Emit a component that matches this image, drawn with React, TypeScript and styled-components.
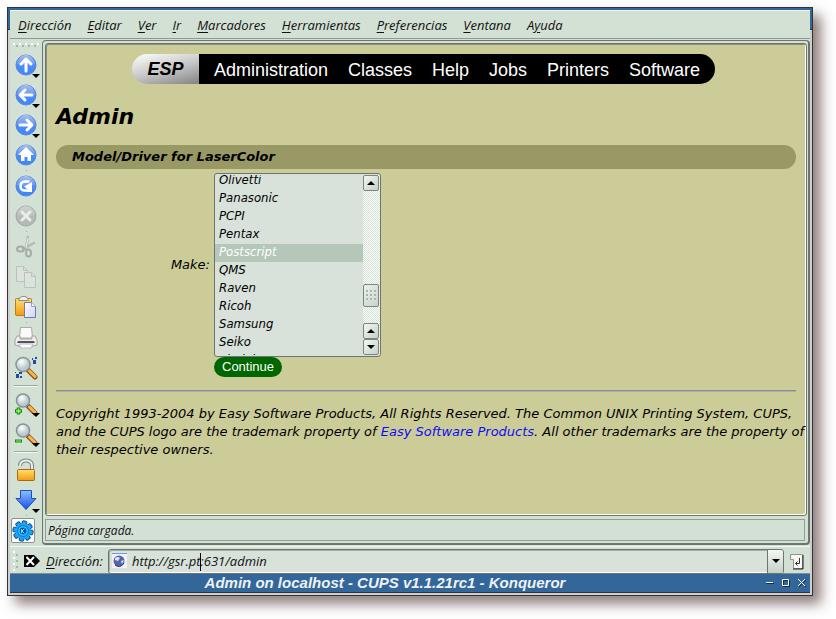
import React, { useEffect, useRef } from "react";
import styled, { createGlobalStyle } from "styled-components";

const chrome = "#d3e0d4";
const khaki = "#cccc99";
const ui = `italic 13px/16px "Open Sans", "Noto Sans", sans-serif`;
const page = `"DejaVu Sans", sans-serif`;

const GlobalStyle = createGlobalStyle`
  *, *::before, *::after { box-sizing: border-box; }
  body { margin: 0; background: #fff; }
  button, input, select { margin: 0; font: inherit; color: inherit; }
  svg { flex: none; }
`;

const Desktop = styled.div`
  display: flex;
  min-height: 100vh;
  padding: 7px 23px 23px 7px;
`;

const WindowFrame = styled.main`
  flex: 1;
  min-width: 0;
  display: flex;
  flex-direction: column;
  padding: 2px;
  border: 1px solid #333;
  background: linear-gradient(#336699 21px, #333 21px, #333 22px, #cdd0ce 22px);
  box-shadow: 8px 8px 12px rgba(76, 48, 48, 0.62);
  color: #111;
  font: ${ui};
`;

const MenuBar = styled.nav`
  display: flex;
  gap: 16px;
  height: 29px;
  padding: 5px 8px 0;
  border-top: 1px solid #edf3ee;
  border-bottom: 1px solid #8f9990;
  background: ${chrome};
`;

const MenuButton = styled.button`
  height: 18px;
  padding: 0;
  border: 0;
  background: none;
`;

const Accel = styled.span`
  text-decoration: underline;
  text-underline-offset: 2px;
`;

const Body = styled.div`
  flex: 1;
  display: flex;
  background: ${chrome};
`;

const Rail = styled.aside`
  flex: 0 0 32px;
  display: flex;
  flex-direction: column;
  align-items: center;
`;

const RailGrip = styled.div`
  flex: 0 0 10px;
  width: 26px;
  margin-top: 1px;
  background:
    radial-gradient(circle at 1px 1px, #fff 1px, transparent 1px) 0 3px / 6px 6px,
    radial-gradient(circle at 1px 1px, #a9b3aa 1px, transparent 1px) 3px 5px / 6px 6px;
  background-repeat: repeat-x;
`;

const RailButton = styled.button<{ $pressed?: boolean }>`
  display: flex;
  align-items: center;
  justify-content: center;
  position: relative;
  width: ${(p) => (p.$pressed ? 24 : 28)}px;
  height: ${(p) => (p.$pressed ? 25 : 30)}px;
  margin-top: ${(p) => (p.$pressed ? 2 : 0)}px;
  margin-right: ${(p) => (p.$pressed ? 6 : 0)}px;
  padding: 0;
  border: ${(p) => (p.$pressed ? "1px solid #8b928c" : "0")};
  border-radius: 2px;
  background: ${(p) => (p.$pressed ? "#fff" : "none")};
`;

const RailArrow = styled.span`
  position: absolute;
  right: 0;
  bottom: 2px;
  border: 4px solid transparent;
  border-top-color: #000;
  border-bottom: 0;
`;

const Dot = styled.i`
  width: 1px;
  height: 1px;
  background: #9aa59b;
`;

const RailRule = styled.hr`
  width: 24px;
  height: 2px;
  margin: 2px 0;
  border: 0;
  border-top: 1px solid #9da89e;
  border-bottom: 1px solid #f4f8f4;
`;

const Panel = styled.section`
  flex: 1;
  min-width: 0;
  display: flex;
  flex-direction: column;
  margin: 1px 0;
  padding: 2px 1px 1px 2px;
  border: 1px solid #6d766e;
  border-width: 1px 2px 2px 1px;
  border-radius: 4px;
  background: ${chrome};
`;

const View = styled.article`
  flex: 1;
  padding: 10px;
  border: 1px solid #6d766e;
  border-radius: 3px;
  background: ${khaki};
  box-shadow: inset -1px -1px #fff, inset 1px 1px #8d9178;
  color: #000;
  font: italic 13px/18px ${page};
`;

const Status = styled.div`
  height: 22px;
  margin: 3px 2px 1px 0;
  padding: 3px 2px;
  border: 1px solid #929d94;
  font-size: 12px;
`;

const SiteNav = styled.nav`
  display: flex;
  justify-content: center;
  padding-right: 5px;
  font: 18px/30px "Liberation Sans", Arial, sans-serif;
`;

const Esp = styled.a`
  width: 67px;
  border-radius: 15px 0 0 15px;
  background: linear-gradient(165deg, #f4f4f4 10%, #c8c8c8 50%, #8a8a8a 95%);
  color: #000;
  font-weight: bold;
  font-style: italic;
  text-align: center;
  text-decoration: none;
`;

const SiteLinks = styled.div`
  display: flex;
  gap: 20px;
  padding: 1px 15px 0;
  height: 30px;
  border-radius: 0 15px 15px 0;
  background: #000;
`;

const SiteLink = styled.a`
  color: #fff;
  text-decoration: none;
`;

const Title = styled.h1`
  margin: 19px 0 14px;
  font-size: 22px;
  line-height: 28px;
`;

const Heading = styled.h2`
  margin: 0;
  padding: 0 16px;
  border-radius: 12px;
  background: #999966;
  font-size: 13px;
  line-height: 24px;
`;

const Form = styled.form`
  display: grid;
  grid-template-columns: 154px 1fr;
  column-gap: 4px;
  align-items: center;
  justify-items: start;
  margin-top: 4px;
`;

const MakeLabel = styled.label`
  justify-self: end;
`;

const ListBox = styled.div`
  display: flex;
  height: 184px;
  width: 167px;
  padding: 1px 0;
  border: 1px solid #6d766e;
  border-radius: 3px;
  background: #d8e2da;
  overflow: hidden;
`;

const List = styled.select`
  flex: 1;
  min-width: 0;
  height: 180px;
  padding: 0;
  border: 0;
  outline: 0;
  background: none;
  overflow-y: scroll;
  scrollbar-width: none;
  font: italic 13px/18px "DejaVu Sans Condensed", "DejaVu Sans", sans-serif;
  font-stretch: condensed;

  option {
    height: 18px;
    min-height: 18px;
    padding: 0 4px;
    line-height: 18px;
  }
  option:checked {
    background: linear-gradient(#b5c7b9, #b5c7b9);
    -webkit-text-fill-color: #fff;
  }
`;

const ScrollBar = styled.div`
  flex: 0 0 17px;
  display: flex;
  flex-direction: column;
  background: repeating-conic-gradient(#fff 0 25%, #d3e0d4 0 50%) 0 0 / 2px 2px;
`;

const ScrollButton = styled.button`
  display: flex;
  align-items: center;
  justify-content: center;
  width: 16px;
  height: 16px;
  padding: 0;
  border: 1px solid #7d867e;
  border-radius: 2px;
  background: linear-gradient(135deg, #f2f7f3, #c5d1c7);
`;

const Thumb = styled.div`
  width: 16px;
  height: 23px;
  margin: 93px 0 16px;
  padding: 5px 2px;
  border: 1px solid #7d867e;
  border-radius: 2px;
  background: linear-gradient(135deg, #eaf1eb, #c8d4ca);

  &::before {
    content: "";
    display: block;
    height: 11px;
    background: radial-gradient(circle at 1px 1px, #a9b5ab 1px, #eef3ef 1px, transparent 2px) 0 0 / 4px 4px;
  }
`;

const Continue = styled.button`
  grid-column: 2;
  height: 20px;
  padding: 0 8px;
  border: 0;
  border-radius: 10px;
  background: #006600;
  color: #fff;
  font: 13px/20px "Liberation Sans", Arial, sans-serif;
`;

const Rule = styled.hr`
  height: 2px;
  margin: 13px 0;
  border: 0;
  border-top: 1px solid #8b8b93;
  border-bottom: 1px solid #adada0;
`;

const Copyright = styled.p`
  margin: 0 -9px 0 0;
`;

const TextLink = styled.a`
  color: #0c0cf0;
  text-decoration: none;
`;

const LocationBar = styled.div`
  display: flex;
  align-items: center;
  height: 28px;
  padding: 2px 6px 0 3px;
  border-top: 1px solid #f3f7f3;
  border-bottom: 1px solid #7f8f91;
  background: ${chrome};
`;

const BarGrip = styled.div`
  width: 6px;
  height: 20px;
  margin-right: 5px;
  background:
    radial-gradient(circle at 1px 1px, #fff 1px, transparent 1px) 0 0 / 6px 6px,
    radial-gradient(circle at 1px 1px, #a9b3aa 1px, transparent 1px) 3px 3px / 6px 6px;
`;

const IconButton = styled.button`
  display: flex;
  flex: none;
  padding: 0;
  border: 0;
  background: none;
`;

const LocationLabel = styled.label`
  width: 62px;
  margin-left: 6px;
`;

const Combo = styled.div`
  position: relative;
  flex: 1;
  display: flex;
  align-items: center;
  height: 25px;
  margin-right: 5px;
  padding-left: 3px;
  border: 1px solid #6d766e;
  border-radius: 3px;
  background: #d8e2da;
  box-shadow: inset 0 -1px #fff, inset 1px 1px #a5aea6;
`;

const Address = styled.input`
  flex: 1;
  min-width: 0;
  height: 21px;
  padding: 0 4px;
  border: 0;
  outline: 0;
  background: none;
`;

const Caret = styled.span`
  position: absolute;
  left: 91px;
  top: 3px;
  width: 1px;
  height: 18px;
  background: #000;
`;

const ComboArrow = styled.button`
  display: flex;
  align-items: center;
  justify-content: center;
  align-self: stretch;
  width: 16px;
  padding: 0;
  border: 0;
  border-left: 1px solid #6d766e;
  border-radius: 0 2px 2px 0;
  background: linear-gradient(#f2f7f3, #c5d1c7);
`;

const TitleBar = styled.header`
  display: flex;
  align-items: center;
  height: 19px;
  padding-right: 2px;
  border-bottom: 1px solid #333;
  background: #336699;
  color: #eef2f5;
`;

const WindowTitle = styled.div`
  flex: 1;
  padding-right: 4px;
  text-align: center;
  font: italic bold 15px/18px "Liberation Sans", Arial, sans-serif;
`;

const WindowButtons = styled.div`
  display: flex;
  gap: 4px;
`;

const Triangle = ({ up }: { up?: boolean }) => (
  <svg width="8" height="4" viewBox="0 0 8 4" aria-hidden>
    <path d={up ? "M0 4L4 0L8 4Z" : "M0 0H8L4 4Z"} fill="#000" />
  </svg>
);

const Icon = ({ children }: { children: React.ReactNode }) => (
  <svg width="24" height="24" viewBox="0 0 24 24" aria-hidden>{children}</svg>
);

const HiddenSvg = styled.svg`
  position: absolute;
`;

const Defs = () => (
  <HiddenSvg width="0" height="0" aria-hidden>
    <defs>
      <linearGradient id="blue" x2="0" y2="1"><stop stopColor="#2c66d8" /><stop offset=".5" stopColor="#4d8cf5" /><stop offset="1" stopColor="#3c86ff" /></linearGradient>
      <linearGradient id="gloss" x2="0" y2="1"><stop stopColor="#fff" stopOpacity=".75" /><stop offset="1" stopColor="#fff" stopOpacity=".15" /></linearGradient>
      <linearGradient id="gold" x2="0" y2="1"><stop stopColor="#ffe070" /><stop offset="1" stopColor="#f39a10" /></linearGradient>
      <linearGradient id="paper" x2="1" y2="1"><stop stopColor="#fff" /><stop offset="1" stopColor="#cfd3f6" /></linearGradient>
      <linearGradient id="arrow" x2="0" y2="1"><stop stopColor="#8cc0ff" /><stop offset="1" stopColor="#1450e6" /></linearGradient>
      <radialGradient id="lens" cx=".4" cy=".3"><stop stopColor="#fff" /><stop offset="1" stopColor="#bdc9cd" /></radialGradient>
    </defs>
  </HiddenSvg>
);

const Ball = ({ d, gray, line }: { d: string; gray?: boolean; line?: boolean }) => (
  <Icon>
    <circle cx="12" cy="12" r="10" fill={gray ? "#b4bab5" : "url(#blue)"} stroke={gray ? "#a2a9a3" : "#5a86d6"} />
    <path d="M3 11A9 9 0 0 1 21 11Q12 14 3 11Z" fill="url(#gloss)" opacity={gray ? 0.5 : 0.8} />
    <path d={d} fill={line ? "none" : "#fff"} stroke={line ? (gray ? "#e9eeea" : "#fff") : "none"} strokeWidth="3" strokeLinecap="round" strokeLinejoin="round" />
  </Icon>
);

const Lens = ({ children, small }: { children?: React.ReactNode; small?: boolean }) => (
  <Icon>
    <path d="M14.5 14.5L21 21" stroke="#7b5a2b" strokeWidth="5" strokeLinecap="round" />
    <path d="M15.5 15L21 20.5" stroke="#ffb347" strokeWidth="3" strokeLinecap="round" />
    <circle cx="9" cy="8.5" r={small ? 6.5 : 7} fill="url(#lens)" stroke="#899499" strokeWidth="1.5" />
    {children}
  </Icon>
);

const icons = {
  up: <Ball line d="M12 18V7M7 11L12 6L17 11" />,
  back: <Ball line d="M18 12H7M11 7L6 12L11 17" />,
  forward: <Ball line d="M6 12H17M13 7L18 12L13 17" />,
  home: <Ball d="M12 4L20 12H17V18H13.5V14H10.5V18H7V12H4Z" />,
  reload: (
    <Icon>
      <circle cx="12" cy="12" r="10" fill="url(#blue)" stroke="#5a86d6" />
      <path d="M3 11A9 9 0 0 1 21 11Q12 14 3 11Z" fill="url(#gloss)" opacity="0.8" />
      <path d="M15.5 7.5H11Q6.500 8 6.500 12Q6.500 16.500 11 16.500H14" fill="none" stroke="#fff" strokeWidth="2.500" />
      <path d="M18 8V18H13V15L10 12.500Z" fill="#fff" />
    </Icon>
  ),
  stop: <Ball gray line d="M8 8L16 16M16 8L8 16" />,
  cut: (
    <Icon>
      <path d="M14 2L12 14M20 8L9 14" stroke="#b3bbb4" strokeWidth="2.5" strokeLinecap="round" />
      <path d="M14 3L12 13" stroke="#e8eee9" />
      <ellipse cx="6.5" cy="14" rx="3.5" ry="2.5" fill="none" stroke="#a5ada6" strokeWidth="2" />
      <ellipse cx="14.5" cy="18" rx="2.5" ry="3.5" fill="none" stroke="#a5ada6" strokeWidth="2" />
    </Icon>
  ),
  copy: (
    <Icon>
      <path d="M2.5 1.5H9.5L13.5 5.5V16.5H2.5Z" fill="#dbe3dc" stroke="#b9c3bb" />
      <path d="M10.5 7.5H17.5L21.5 11.5V22.5H10.5Z" fill="#dbe3dc" stroke="#b9c3bb" />
      <path d="M9.5 1.5V5.5H13.5M17.5 7.5V11.5H21.5" fill="none" stroke="#b9c3bb" />
    </Icon>
  ),
  paste: (
    <Icon>
      <rect x="1.5" y="3.5" width="16" height="17" rx="1" fill="url(#gold)" stroke="#bd7d14" />
      <path d="M4.5 5.5Q5 2 8 1.5H11Q14 2 14.5 5.5Z" fill="#eef0f1" stroke="#8b9091" />
      <path d="M10.5 7.5H17.5L21.5 11.5V22.5H10.5Z" fill="url(#paper)" stroke="#7578a8" />
      <path d="M17.5 7.5V11.5H21.5" fill="#fff" stroke="#9a9cc8" />
    </Icon>
  ),
  print: (
    <Icon>
      <path d="M6.5 1.5H17.5L18.5 12H5.5Z" fill="#fafafa" stroke="#aaa" />
      <path d="M3 10H6V13H18V10H21L23 14V19Q12 23 1 19V14Z" fill="#eee" stroke="#a3a3a3" />
      <path d="M4 15H20L21 17H3Z" fill="#555" />
      <path d="M5 18H19L17 22H7Z" fill="#fff" stroke="#bbb" />
    </Icon>
  ),
  find: (
    <Lens>
      <path d="M19 4h3v4h-3zM18 2h1v2h-1zM21 1h2v2h-2zM2 18h3v4h-3zM1 16h1v1h-1zM5 16h3v2h-3zM6 20h2v2h-2z" fill="#1d4f9e" />
    </Lens>
  ),
  zoomIn: <Lens small><path d="M4.5 15.5V22.5M1 19H8" stroke="#168516" strokeWidth="3.5" /><path d="M4.5 16.5V21.5M2 19H7" stroke="#8cff60" strokeWidth="1.5" /></Lens>,
  zoomOut: <Lens small><path d="M1 19H8" stroke="#168516" strokeWidth="3" /><path d="M2 19H7" stroke="#8cff60" /></Lens>,
  lock: (
    <Icon>
      <path d="M6 8Q6 2.5 12 2.5Q18 2.5 18 8V12" fill="none" stroke="#808788" strokeWidth="4" />
      <path d="M6 8Q6 2.5 12 2.5Q18 2.5 18 8V12" fill="none" stroke="#e9eeee" strokeWidth="2" />
      <rect x="3.5" y="11.5" width="17" height="11" rx="1" fill="url(#gold)" stroke="#a86b08" />
    </Icon>
  ),
  down: <Icon><path d="M6.5 2.5H17.5V10.5H22L12 21.5L2 10.5H6.5Z" fill="url(#arrow)" stroke="#1e4fb4" /></Icon>,
  gear: (
    <svg width="22" height="22" viewBox="0 0 24 24" aria-hidden>
      {[10, 55, 100, 145, 190, 235, 280, 325].map((a) => (
        <rect key={a} x="9.5" y="1" width="5" height="6" rx="1" fill="#1aa6f2" stroke="#06428c" transform={`rotate(${a} 12 12)`} />
      ))}
      <circle cx="12" cy="12" r="7.5" fill="#0a78e0" stroke="#1aa6f2" strokeWidth="2" />
      <circle cx="12" cy="12" r="4.5" fill="#0b4fb4" stroke="#22d8fa" strokeWidth="1.5" />
      <path d="M10.5 14.5V10M10.5 12.5L13.5 9.5M11 12L13.5 14.5" stroke="#9ff4ff" fill="none" />
    </svg>
  ),
};

type RailItem = { icon?: keyof typeof icons; label?: string; menu?: boolean; kind?: "dot" | "rule" };
const rail: RailItem[] = [
  { icon: "up", label: "Arriba", menu: true },
  { icon: "back", label: "Atrás", menu: true },
  { icon: "forward", label: "Adelante", menu: true },
  { icon: "home", label: "Inicio" },
  { kind: "dot" },
  { icon: "reload", label: "Recargar" },
  { icon: "stop", label: "Detener" },
  { kind: "dot" },
  { icon: "cut", label: "Cortar" },
  { icon: "copy", label: "Copiar" },
  { icon: "paste", label: "Pegar" },
  { kind: "dot" },
  { icon: "print", label: "Imprimir" },
  { icon: "find", label: "Buscar" },
  { kind: "rule" },
  { icon: "zoomIn", label: "Ampliar", menu: true },
  { icon: "zoomOut", label: "Reducir", menu: true },
  { kind: "rule" },
  { icon: "lock", label: "Seguridad" },
  { icon: "down", label: "Descargar", menu: true },
  { kind: "dot" },
];

const menus: [string, string, string][] = [
  ["", "D", "irección"], ["", "E", "ditar"], ["", "V", "er"], ["", "I", "r"], ["", "M", "arcadores"],
  ["", "H", "erramientas"], ["", "P", "referencias"], ["", "V", "entana"], ["A", "y", "uda"],
];
const makes = ["Olivetti", "Panasonic", "PCPI", "Pentax", "Postscript", "QMS", "Raven", "Ricoh", "Samsung", "Seiko", "Sindoh"];

export default function App() {
  const list = useRef<HTMLSelectElement>(null);
  const scrollBy = (amount: number) => list.current?.scrollBy(0, amount);
  useEffect(() => {
    if (list.current) list.current.scrollTop = 3;
  }, []);

  return (
    <Desktop>
      <GlobalStyle />
      <Defs />
      <WindowFrame>
        <MenuBar>
          {menus.map(([before, key, after]) => (
            <MenuButton key={key + after}>{before}<Accel>{key}</Accel>{after}</MenuButton>
          ))}
        </MenuBar>
        <Body>
          <Rail>
            <RailGrip />
            {rail.map((item, i) =>
              item.kind === "dot" ? <Dot key={i} /> : item.kind === "rule" ? <RailRule key={i} /> : (
                <RailButton key={i} aria-label={item.label}>
                  {icons[item.icon!]}
                  {item.menu && <RailArrow />}
                </RailButton>
              )
            )}
            <RailButton $pressed aria-label="Konqueror">{icons.gear}</RailButton>
          </Rail>
          <Panel>
            <View>
              <SiteNav>
                <Esp href="#esp">ESP</Esp>
                <SiteLinks>
                  {["Administration", "Classes", "Help", "Jobs", "Printers", "Software"].map((name) => (
                    <SiteLink key={name} href={`#${name.toLowerCase()}`}>{name}</SiteLink>
                  ))}
                </SiteLinks>
              </SiteNav>
              <Title>Admin</Title>
              <Heading>Model/Driver for LaserColor</Heading>
              <Form onSubmit={(e) => e.preventDefault()}>
                <MakeLabel htmlFor="make">Make:</MakeLabel>
                <ListBox>
                  <List id="make" size={10} defaultValue="Postscript" ref={list}>
                    {makes.map((m) => <option key={m}>{m}</option>)}
                  </List>
                  <ScrollBar>
                    <ScrollButton type="button" aria-label="Subir" onClick={() => scrollBy(-18)}><Triangle up /></ScrollButton>
                    <Thumb />
                    <ScrollButton type="button" aria-label="Subir" onClick={() => scrollBy(-18)}><Triangle up /></ScrollButton>
                    <ScrollButton type="button" aria-label="Bajar" onClick={() => scrollBy(18)}><Triangle /></ScrollButton>
                  </ScrollBar>
                </ListBox>
                <Continue>Continue</Continue>
              </Form>
              <Rule />
              <Copyright>
                Copyright 1993-2004 by Easy Software Products, All Rights Reserved. The Common UNIX Printing System,
                CUPS, and the CUPS logo are the trademark property of <TextLink href="#easysw">Easy Software Products</TextLink>.
                All other trademarks are the property of their respective owners.
              </Copyright>
            </View>
            <Status>Página cargada.</Status>
          </Panel>
        </Body>
        <LocationBar>
          <BarGrip />
          <IconButton aria-label="Borrar dirección">
            <svg width="16" height="14" viewBox="0 0 16 14" aria-hidden>
              <path d="M0 1H10L16 7L10 13H0Z" fill="#000" />
              <path d="M2.5 3L10 11M10 3L2.5 11" stroke="#fff" strokeWidth="2" />
            </svg>
          </IconButton>
          <LocationLabel htmlFor="address"><Accel>D</Accel>irección:</LocationLabel>
          <Combo>
            <svg width="16" height="16" viewBox="0 0 16 16" aria-hidden>
              <rect width="15" height="15" fill="#eef1fa" />
              <path d="M0 0H15V1H0Z" fill="#6e9be0" />
              <circle cx="7" cy="8" r="5.5" fill="#5865a4" />
              <path d="M3 5Q6 3 8 5L6 8L3 7ZM9 8L12 7L10 11Z" fill="#dbe3f5" />
              <path d="M3 12Q8 16 12 10" fill="none" stroke="#313b72" />
            </svg>
            <Address id="address" defaultValue="http://gsr.pt:631/admin" />
            <Caret />
            <ComboArrow aria-label="Historial"><Triangle /></ComboArrow>
          </Combo>
          <IconButton aria-label="Ir a la dirección">
            <svg width="15" height="17" viewBox="0 0 15 17" aria-hidden>
              <path d="M1.5 1.5H13.5V15.5H4.5V6.5H1.5Z" fill="#f6f8f6" stroke="#8f948f" />
              <path d="M14 2V16H4" fill="none" stroke="#222" />
              <path d="M10.5 5V10.5H6.5M8.5 8.5L6.5 10.5L8.5 12.5" fill="none" stroke="#333" />
            </svg>
          </IconButton>
        </LocationBar>
        <TitleBar>
          <WindowTitle>Admin on localhost - CUPS v1.1.21rc1 - Konqueror</WindowTitle>
          <WindowButtons>
            <IconButton aria-label="Minimizar"><svg width="12" height="12"><path d="M2 6.5H10" stroke="#17293c" /><path d="M2 5.5H9" stroke="#fff" /></svg></IconButton>
            <IconButton aria-label="Maximizar"><svg width="12" height="12"><path d="M3.5 3.5H9.5V9.5H3.5Z" fill="none" stroke="#17293c" /><path d="M2.5 2.5H8.5V8.5H2.5Z" fill="none" stroke="#fff" /></svg></IconButton>
            <IconButton aria-label="Cerrar"><svg width="12" height="12"><path d="M3 3L10 10M10 3L3 10" stroke="#17293c" /><path d="M2 2L9 9M9 2L2 9" stroke="#fff" /></svg></IconButton>
          </WindowButtons>
        </TitleBar>
      </WindowFrame>
    </Desktop>
  );
}
